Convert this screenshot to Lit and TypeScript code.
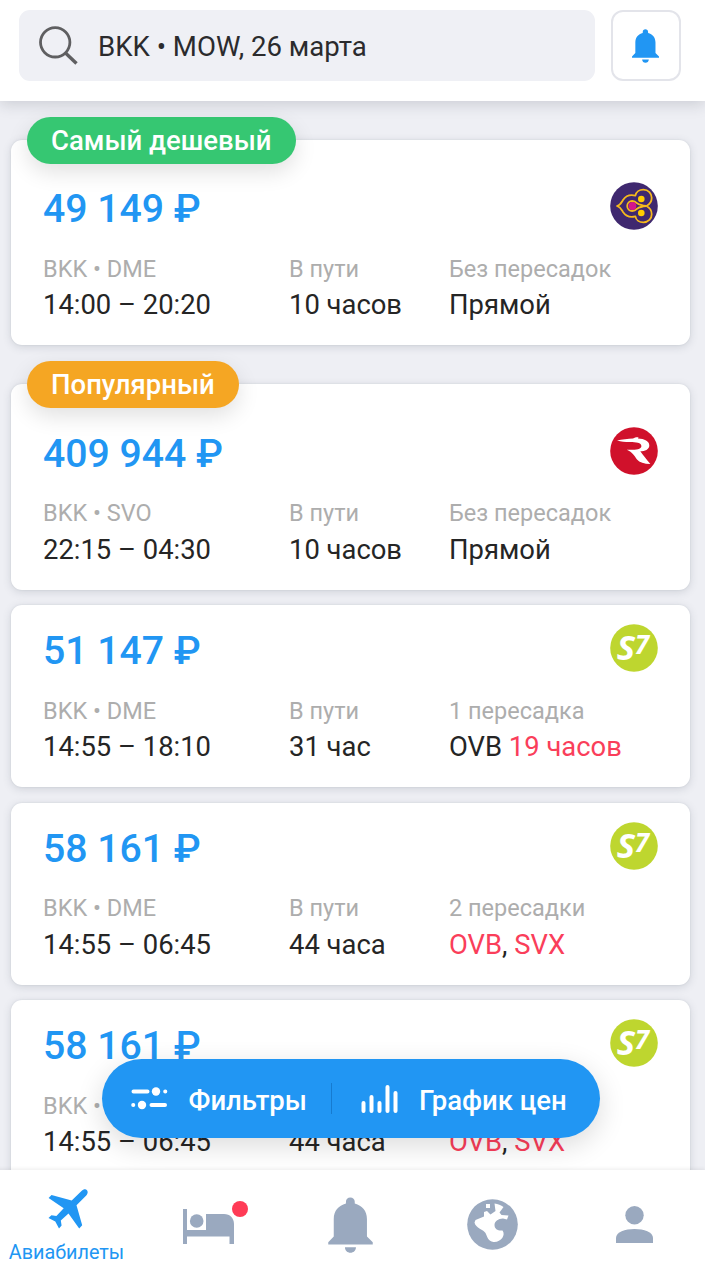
import { LitElement, html, css, svg, nothing } from "lit";
import { customElement, property } from "lit/decorators.js";
import { classMap } from "lit/directives/class-map.js";

interface Part {
  text: string;
  alert?: boolean;
}

interface Ticket {
  badge?: { text: string; tone: "green" | "orange" };
  price: string;
  airline: "thai" | "rossiya" | "s7";
  route: string;
  times: string;
  duration: string;
  stopsLabel: string;
  stops: Part[];
}

const viaTwo: Part[] = [{ text: "OVB", alert: true }, { text: ", " }, { text: "SVX", alert: true }];

const tickets: Ticket[] = [
  {
    badge: { text: "Самый дешевый", tone: "green" },
    price: "49 149 ₽",
    airline: "thai",
    route: "BKK • DME",
    times: "14:00 – 20:20",
    duration: "10 часов",
    stopsLabel: "Без пересадок",
    stops: [{ text: "Прямой" }],
  },
  {
    badge: { text: "Популярный", tone: "orange" },
    price: "409 944 ₽",
    airline: "rossiya",
    route: "BKK • SVO",
    times: "22:15 – 04:30",
    duration: "10 часов",
    stopsLabel: "Без пересадок",
    stops: [{ text: "Прямой" }],
  },
  {
    price: "51 147 ₽",
    airline: "s7",
    route: "BKK • DME",
    times: "14:55 – 18:10",
    duration: "31 час",
    stopsLabel: "1 пересадка",
    stops: [{ text: "OVB " }, { text: "19 часов", alert: true }],
  },
  {
    price: "58 161 ₽",
    airline: "s7",
    route: "BKK • DME",
    times: "14:55 – 06:45",
    duration: "44 часа",
    stopsLabel: "2 пересадки",
    stops: viaTwo,
  },
  {
    price: "58 161 ₽",
    airline: "s7",
    route: "BKK • DME",
    times: "14:55 – 06:45",
    duration: "44 часа",
    stopsLabel: "2 пересадки",
    stops: viaTwo,
  },
];

const logos = {
  thai: svg`
    <circle cx="24" cy="24" r="23.8" fill="#3f286f"/>
    <g fill="none" stroke="#f6b91c" stroke-width="1.8" stroke-linejoin="round">
      <path d="M7 24C10.500 23 11.500 20.500 13 18C15.500 14.200 20 12.300 25.400 13.600C26 10 29.500 7.600 33.400 7.600C38.300 7.600 41.700 11.300 41.700 15.800C41.700 19.500 39.500 22.400 36.500 24C39.500 25.600 41.700 28.500 41.700 32.200C41.700 36.700 38.300 40.400 33.400 40.400C29.500 40.400 26 38 25.400 34.400C20 35.700 15.500 33.800 13 30C11.500 27.500 10.500 25 7 24Z"/>
      <path d="M36.500 24C32 23.600 29.800 23.300 27.200 21.300C25.800 19.900 24 19 22.200 19A5 5 0 0 0 22.200 29C24 29 25.800 28.100 27.200 26.700C29.800 24.700 32 24.400 36.500 24"/>
    </g>
    <circle cx="31.300" cy="17" r="3.300" fill="#fc0"/>
    <circle cx="31.300" cy="31" r="3.300" fill="#fc0"/>
    <circle cx="22.500" cy="24" r="3.900" fill="#d5148a"/>`,
  rossiya: svg`
    <circle cx="24" cy="24" r="23.800" fill="#d0112b"/>
    <path d="M7 13.600C12 12.400 18 12 23 11.600C25 10.200 27 10 28.500 10.300L28 11.600C34.500 11.900 39.300 14.200 39.300 18.400C39.300 22.500 34.800 24 30.300 24.300C33.500 28.500 36.500 32.500 40.400 37C34 37 29.500 35.400 27 32.500C24.500 29 22.500 25 16.800 22.700C23 23.100 31.200 22.800 31.400 19.200C31.500 15.800 26 15.200 20 15.100C15 15 11 14.800 7 13.600Z" fill="#fff"/>`,
  s7: svg`
    <circle cx="24" cy="24" r="23.800" fill="#bed62f"/>
    <text class="s7" x="6.800" y="36.300" font-size="34.500">S</text>
    <text class="s7" x="24.800" y="30" font-size="26">7</text>`,
};

const bellShape = svg`<path d="M22 0.500C24.700 0.500 26.500 2.300 26.500 4.800V6.500C34 8.500 38.700 14 38.700 22V39.500L44.500 45.300V47.500H0V45.300L5.500 39.500V22C5.500 14 10.200 8.500 17.700 6.500V4.800C17.700 2.300 19.500 0.500 22 0.500ZM16.700 50.200H27.700C27.700 53.500 25.200 55.700 22.200 55.700C19.200 55.700 16.700 53.500 16.700 50.200Z" fill="currentColor"/>`;

@customElement("ticket-card")
class TicketCard extends LitElement {
  @property({ attribute: false }) ticket!: Ticket;

  static styles = css`
    :host {
      display: block;
      flex: none;
    }
    .card {
      position: relative;
      box-sizing: border-box;
      height: 181.800px;
      padding: 21px 31.500px 0 32px;
      border-radius: 11px;
      background: #fff;
      box-shadow: 0 2px 9px rgba(60, 70, 90, 0.17), 0 0 2px rgba(60, 70, 90, 0.12);
    }
    .card.badged {
      height: 205.400px;
      padding-top: 44.300px;
      margin-top: 23.500px;
    }
    .badge {
      position: absolute;
      left: 16px;
      top: -23.500px;
      height: 47.500px;
      padding: 0 24px;
      border-radius: 24px;
      color: #fff;
      font-size: 27.500px;
      font-weight: 500;
      line-height: 48px;
      white-space: nowrap;
      box-shadow: 0 8px 22px rgba(0, 0, 0, 0.12);
    }
    .green {
      background: #36c772;
    }
    .orange {
      background: #f5a623;
    }
    .top {
      display: flex;
      justify-content: space-between;
      height: 48px;
    }
    .price {
      color: #2196f3;
      font-size: 39.200px;
      font-weight: 500;
      line-height: 50px;
    }
    .logo {
      width: 48px;
      height: 48px;
      margin-top: -2px;
    }
    .s7 {
      fill: #fff;
      font-family: "Open Sans", sans-serif;
      font-weight: 700;
      font-style: italic;
    }
    .info {
      display: grid;
      grid-template-columns: 246px 160px 1fr;
      margin-top: 22.600px;
      white-space: nowrap;
    }
    .label {
      color: #adadad;
      font-size: 23.500px;
      line-height: 28px;
    }
    .value {
      margin-top: 6.200px;
      color: #252525;
      font-size: 27.400px;
      line-height: 32px;
      white-space: pre;
    }
    .alert {
      color: #fa3e5a;
    }
  `;

  render() {
    const t = this.ticket;
    return html`<article class=${classMap({ card: true, badged: !!t.badge })}>
      ${t.badge ? html`<div class="badge ${t.badge.tone}">${t.badge.text}</div>` : nothing}
      <div class="top">
        <div class="price">${t.price}</div>
        <svg class="logo" viewBox="0 0 48 48">${logos[t.airline]}</svg>
      </div>
      <div class="info">
        <div><div class="label">${t.route}</div><div class="value">${t.times}</div></div>
        <div><div class="label">В пути</div><div class="value">${t.duration}</div></div>
        <div><div class="label">${t.stopsLabel}</div><div class="value">${t.stops.map(
          (p) => html`<span class=${classMap({ alert: !!p.alert })}>${p.text}</span>`
        )}</div></div>
      </div>
    </article>`;
  }
}

@customElement("app-root")
class AppRoot extends LitElement {
  static styles = css`
    :host {
      position: relative;
      display: flex;
      flex-direction: column;
      height: 1280px;
      overflow: hidden;
      background: #eeeff4;
      font-family: Roboto, sans-serif;
    }
    svg {
      display: block;
      flex: none;
    }
    header {
      z-index: 2;
      display: flex;
      flex: none;
      box-sizing: border-box;
      gap: 16px;
      height: 100.500px;
      padding: 10px 24px 0 19px;
      background: #fff;
      box-shadow: 0 3px 14px rgba(40, 45, 60, 0.18);
    }
    .search {
      display: flex;
      flex: 1;
      align-items: center;
      box-sizing: border-box;
      gap: 20px;
      height: 71px;
      padding: 0 19px;
      border-radius: 11px;
      background: #eff0f5;
      color: #2b2b2d;
      font-size: 27.600px;
      line-height: 34px;
    }
    .search span {
      padding-top: 3px;
    }
    .notify {
      display: grid;
      place-items: center;
      box-sizing: border-box;
      width: 70.500px;
      height: 71px;
      border: 2px solid #e3e4ea;
      border-radius: 12px;
      color: #2196f3;
    }
    main {
      display: flex;
      flex: 1;
      flex-direction: column;
      gap: 15.600px;
      min-height: 0;
      padding: 16px 15.500px 0 11px;
      overflow: hidden;
    }
    .tools {
      position: absolute;
      z-index: 1;
      left: 102px;
      top: 1059px;
      display: flex;
      align-items: center;
      box-sizing: border-box;
      width: 497.500px;
      height: 79px;
      padding-left: 29px;
      border-radius: 40px;
      background: #2196f3;
      box-shadow: 0 8px 28px rgba(0, 0, 0, 0.14);
      color: #fff;
      font-size: 27.500px;
      font-weight: 500;
      line-height: 34px;
      white-space: nowrap;
    }
    .tools span {
      padding-top: 4px;
    }
    .filters {
      display: flex;
      align-items: center;
      gap: 20.500px;
      width: 200px;
    }
    .divider {
      width: 1px;
      height: 31px;
      background: #167bd0;
    }
    .chart {
      display: flex;
      align-items: center;
      gap: 21px;
      padding-left: 29px;
    }
    nav {
      z-index: 2;
      display: grid;
      flex: none;
      grid-template-columns: repeat(5, 142px);
      box-sizing: border-box;
      height: 110.500px;
      margin-left: -5px;
      background: #fff;
      box-shadow: 0 -1px 4px rgba(0, 0, 0, 0.08);
      color: #9aa9bf;
    }
    .tab {
      display: grid;
      place-items: center;
      height: 110px;
    }
    .tab.active {
      display: flex;
      flex-direction: column;
      box-sizing: border-box;
      padding: 19.500px 0 0 1px;
      gap: 11.500px;
      color: #2196f3;
      font-size: 19.800px;
      line-height: 24px;
    }
    .plane {
      margin-left: 2px;
    }
    .bed {
      position: relative;
      padding-top: 3px;
    }
    .dot {
      position: absolute;
      right: -14px;
      top: -5px;
      width: 16px;
      height: 16px;
      border-radius: 50%;
      background: #ff3b56;
    }
  `;

  render() {
    return html`
      <header>
        <div class="search">
          <svg width="40" height="40" viewBox="0 0 40 40" fill="none" stroke="#5f5f61" stroke-width="2.800">
            <circle cx="17.200" cy="16.300" r="14.700" />
            <path d="M27.500 27L38.500 37.500" stroke-width="3.400" />
          </svg>
          <span>BKK • MOW, 26 марта</span>
        </div>
        <div class="notify"><svg width="27" height="34" viewBox="0 0 44.500 56">${bellShape}</svg></div>
      </header>
      <main>${tickets.map((t) => html`<ticket-card .ticket=${t}></ticket-card>`)}</main>
      <div class="tools">
        <div class="filters">
          <svg width="37" height="24" viewBox="0 0 37 24" fill="none" stroke="#fff" stroke-width="4" stroke-linecap="round">
            <path d="M2.500 4.500H16.500M34.200 4.500H34.300M2.200 18H2.300M20.500 18H34" />
            <circle cx="25" cy="4.500" r="4.200" fill="#fff" stroke="none" />
            <circle cx="11" cy="18" r="4.200" fill="#fff" stroke="none" />
          </svg>
          <span>Фильтры</span>
        </div>
        <div class="divider"></div>
        <div class="chart">
          <svg width="37" height="28" viewBox="0 0 37 28" fill="none" stroke="#fff" stroke-width="4" stroke-linecap="round">
            <path d="M2.500 18V26M10.500 12V26M18.500 18V26M26.500 2V26M34.500 8V26" />
          </svg>
          <span>График цен</span>
        </div>
      </div>
      <nav>
        <div class="tab active">
          <svg class="plane" width="40" height="40" viewBox="0 0 40 40" fill="currentColor">
            <path d="M39 1.200C40.300 3 39.600 4.800 38 6.700L28.500 16.300L34.200 36.200L31.200 39.600L20.500 24.500L12.800 31.500L13.600 36.500L11 39.500L7.300 32.600L0.500 29L3.400 26.300L8.400 27L15.700 19.300L0.600 9L3.500 6L23.700 11.400L33.500 2C35.300 0.400 37.500-0.300 39 1.200Z" />
          </svg>
          <span>Авиабилеты</span>
        </div>
        <div class="tab">
          <div class="bed">
            <svg width="51" height="35" viewBox="0 0 51 35" fill="currentColor">
              <path d="M0 0H4V21H23V5H41C47 5 51 9 51 15V35H46.500V27.500H4V35H0Z" />
              <circle cx="13.700" cy="12" r="6.800" />
            </svg>
            <div class="dot"></div>
          </div>
        </div>
        <div class="tab"><svg width="45" height="56" viewBox="0 0 44.500 56">${bellShape}</svg></div>
        <div class="tab">
          <svg width="51" height="51" viewBox="0 0 51 51">
            <circle cx="25.500" cy="25.500" r="25.300" fill="currentColor" />
            <path d="M19 5H23V9H19ZM27.500 4.500C31 5 34 6 36.500 8L32.500 13.500L34.500 16L41.500 16.500L40 20.500L36 19.500C31 19.500 27.500 22.500 27.500 26C27.500 30 31 32 35.500 31.500C39 36 34 43.500 26.500 43C21 42.500 20 37 18.500 34C17 31 8.500 29 7.500 23.500L8.500 21L17 17.500V13L20 12L23.500 15.500L28.500 12Z" fill="#fff" />
          </svg>
        </div>
        <div class="tab">
          <svg width="37" height="37" viewBox="0 0 37 37" fill="currentColor">
            <circle cx="18.500" cy="9.200" r="9.200" />
            <path d="M0 37V32C0 26 9 23 18.500 23S37 26 37 32V37Z" />
          </svg>
        </div>
      </nav>
    `;
  }
}
